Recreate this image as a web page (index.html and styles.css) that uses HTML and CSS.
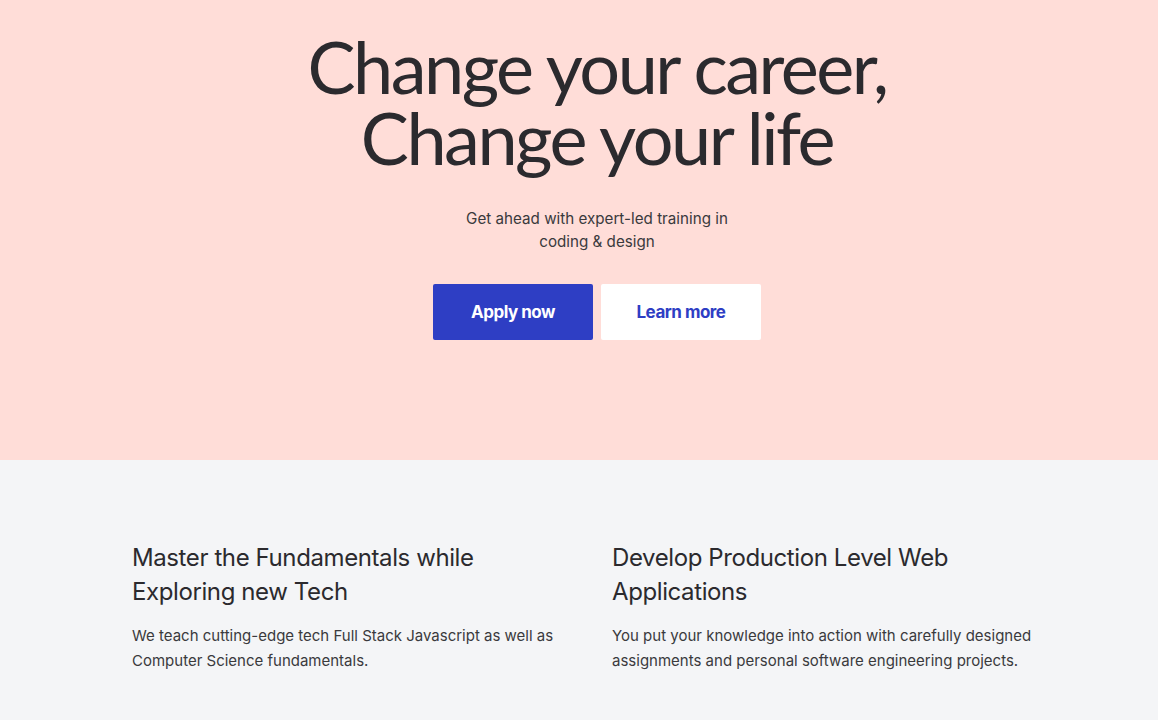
FILE: index.html
```html
<!DOCTYPE html>
<html lang="en">
<head>
<meta charset="utf-8">
<title>Change your career</title>
<link rel="stylesheet" href="styles.css">
</head>
<body>
<section class="hero">
  <h1 class="hero-title">Change your career,<br>Change your life</h1>
  <p class="hero-sub">Get ahead with expert-led training in<br>coding &amp; design</p>
  <div class="hero-actions">
    <a class="btn btn-primary" href="#">Apply now</a>
    <a class="btn btn-secondary" href="#">Learn more</a>
  </div>
</section>
<section class="features">
  <div class="feature">
    <h2 class="feature-title">Master the Fundamentals while Exploring new Tech</h2>
    <p class="feature-text">We teach cutting-edge tech Full Stack Javascript as well as Computer Science fundamentals.</p>
  </div>
  <div class="feature">
    <h2 class="feature-title">Develop Production Level Web Applications</h2>
    <p class="feature-text">You put your knowledge into action with carefully designed assignments and personal software engineering projects.</p>
  </div>
</section>
</body>
</html>
```
FILE: styles.css
```css
* { box-sizing: border-box; }
html, body { margin: 0; padding: 0; }
body {
  font-family: Inter, "Liberation Sans", sans-serif;
  color: #2b2a2e;
  background: #f4f5f7;
}
.hero {
  background: #ffddd8;
  height: 460px;
  padding: 31px 0 0 36px;
  display: flex;
  flex-direction: column;
  align-items: center;
  text-align: center;
}
.hero-title {
  margin: 0;
  font-family: Lato, Inter, sans-serif;
  font-size: 72px;
  font-weight: 400;
  line-height: 71px;
  letter-spacing: -2.5px;
  color: #2b2a2e;
}
.hero-sub {
  margin: 34px 0 0;
  font-size: 15.2px;
  line-height: 23px;
  color: #3a3a3d;
}
.hero-actions {
  margin-top: 31px;
  display: flex;
  gap: 8px;
}
.btn {
  width: 160px;
  height: 56px;
  display: flex;
  align-items: center;
  justify-content: center;
  border-radius: 2px;
  font-size: 17px;
  font-weight: 700;
  letter-spacing: -0.5px;
  text-decoration: none;
}
.btn-primary { background: #2e3ec4; color: #ffffff; }
.btn-secondary { background: #ffffff; color: #2e3ec4; }
.features {
  display: grid;
  grid-template-columns: 432px 432px;
  column-gap: 48px;
  padding: 81px 0 0 132px;
}
.feature-title {
  margin: 0;
  font-size: 24px;
  font-weight: 400;
  line-height: 34px;
  letter-spacing: -0.4px;
  color: #2b2a2e;
}
.feature-text {
  margin: 14px 0 0;
  font-size: 15px;
  line-height: 25px;
  color: #3a3a3d;
}
```
